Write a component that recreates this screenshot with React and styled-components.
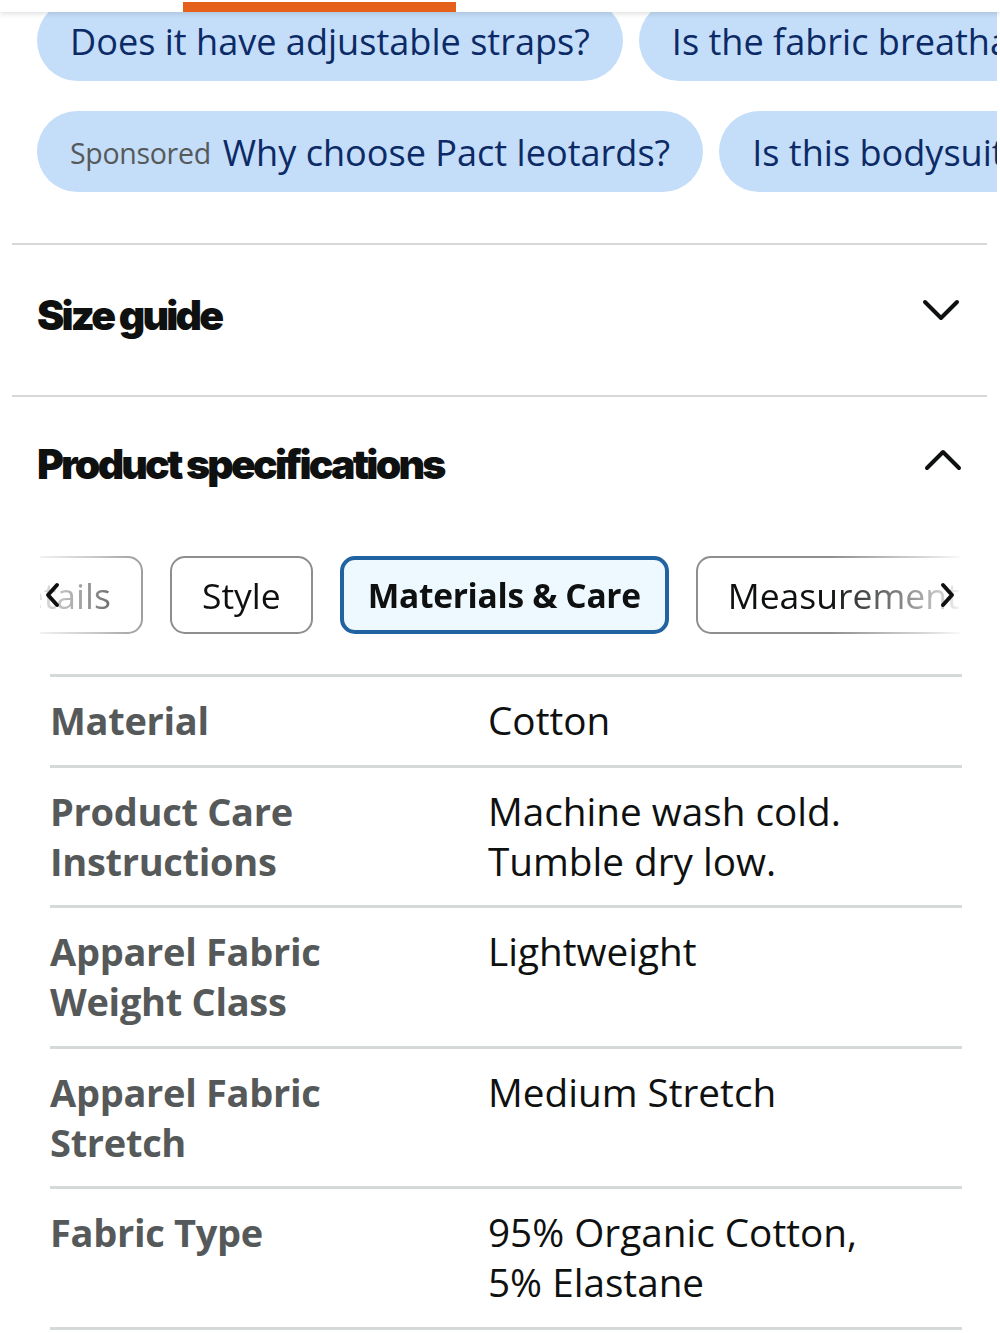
import React from "react";
import styled, { createGlobalStyle, css } from "styled-components";

const GlobalStyle = createGlobalStyle`
  html, body {
    margin: 0;
    padding: 0;
    background: #ffffff;
  }
  body {
    font-family: "Open Sans", "Noto Sans", "DejaVu Sans", sans-serif;
    color: #0f1111;
    -webkit-font-smoothing: antialiased;
  }
  * { box-sizing: border-box; }
`;

const Page = styled.div`
  position: relative;
  width: 1000px;
  min-height: 1333px;
  overflow: hidden;
`;

/* sticky tab header that sits over the scrolled content */
const StickyHeader = styled.div`
  position: absolute;
  top: 0;
  left: 0;
  right: 0;
  height: 12px;
  background: #ffffff;
  box-shadow: 0 2px 5px rgba(0, 0, 0, 0.12);
  z-index: 5;
`;

const ActiveIndicator = styled.div`
  position: absolute;
  left: 183px;
  top: 2px;
  width: 273px;
  height: 10px;
  background: #e4601b;
`;

const QuestionArea = styled.div`
  display: flex;
  flex-direction: column;
  gap: 30px;
  width: 997px;
  overflow: hidden;
  padding-left: 37px;
`;

const PillRow = styled.div`
  display: flex;
  gap: 16px;
  white-space: nowrap;
`;

const Pill = styled.div`
  flex: 0 0 auto;
  display: flex;
  align-items: center;
  gap: 12px;
  height: 81px;
  padding: 0 33px;
  border-radius: 41px;
  background: #c4ddf9;
  color: #0c2b66;
  font-size: 36.1px;
  letter-spacing: 0;
`;

const SponsoredTag = styled.span`
  color: #565959;
  font-size: 28.5px;
  letter-spacing: -0.3px;
  padding-top: 3px;
`;

const Sections = styled.div`
  margin-top: 51px;
  padding: 0 13px 0 12px;
`;

const AccordionHead = styled.div`
  display: flex;
  align-items: center;
  justify-content: space-between;
  border-top: 2px solid #d8d8d8;
  ${(p) =>
    p.$open
      ? css`
          padding: 47px 24px 70px 25px;
        `
      : css`
          height: 152px;
          padding: 0 26px 10px 25px;
        `}
`;

const HeadTitle = styled.h2`
  margin: 0;
  font-family: "Inter", "Roboto", sans-serif;
  font-weight: 900;
  font-size: 41px;
  letter-spacing: -2.8px;
  line-height: 1;
  color: #0f1111;
`;

const Chevron = styled.svg`
  width: 40px;
  height: 26px;
  flex: 0 0 auto;
  margin-top: ${(p) => p.$mt || 0}px;
`;

const SpecBody = styled.div`
  padding: 0 13px 0 28px;
`;

const TabStrip = styled.div`
  position: relative;
  height: 80px;
  padding: 1px 0;
  overflow: hidden;
  -webkit-mask-image: linear-gradient(
    to right,
    rgba(0, 0, 0, 0.12) 0px,
    rgba(0, 0, 0, 0.45) 50px,
    #000 120px,
    #000 790px,
    rgba(0, 0, 0, 0.35) 885px,
    rgba(0, 0, 0, 0.05) 920px
  );
  mask-image: linear-gradient(
    to right,
    rgba(0, 0, 0, 0.12) 0px,
    rgba(0, 0, 0, 0.45) 50px,
    #000 120px,
    #000 790px,
    rgba(0, 0, 0, 0.35) 885px,
    rgba(0, 0, 0, 0.05) 920px
  );
`;

const TabWrap = styled.div`
  position: relative;
  width: 920px;
`;

const TabTrack = styled.div`
  display: flex;
  gap: 27px;
  white-space: nowrap;
`;

const Tab = styled.div`
  flex: 0 0 auto;
  height: 78px;
  display: flex;
  align-items: center;
  padding: 0 30px;
  border: 2px solid #8d8f8f;
  border-radius: 15px;
  font-size: 35.5px;
  color: #0f1111;
  background: #ffffff;
  ${(p) =>
    p.$active &&
    css`
      border: 4px solid #2162a1;
      background: #edf8ff;
      font-weight: 700;
      font-size: 33.5px;
      letter-spacing: -0.3px;
      padding: 0 24px;
    `}
`;

const ScrollArrow = styled.svg`
  position: absolute;
  top: 26px;
  width: 18px;
  height: 28px;
  z-index: 2;
  ${(p) => (p.$side === "left" ? "left: 3px;" : "right: 3px;")}
`;

const SpecTable = styled.div`
  margin: 39px 12px 0 10px;
`;

const SpecRow = styled.div`
  display: grid;
  grid-template-columns: 438px 1fr;
  border-top: 3px solid #d5d9d9;
  padding: 18px 0 19.5px;
  line-height: 50px;
  &:last-child {
    border-bottom: 3px solid #d5d9d9;
  }
`;

const SpecLabel = styled.div`
  color: #565959;
  font-weight: 700;
  font-size: 38px;
  letter-spacing: -0.3px;
`;

const SpecValue = styled.div`
  color: #0f1111;
  font-size: 38.7px;
  letter-spacing: 0;
`;

const ChevronDown = () => (
  <Chevron viewBox="0 0 40 26" $mt={-10}>
    <path d="M4 5 L20 21 L36 5" fill="none" stroke="#0f1111" strokeWidth="4" strokeLinecap="round" strokeLinejoin="round" />
  </Chevron>
);

const ChevronUp = () => (
  <Chevron viewBox="0 0 40 26" $mt={-10}>
    <path d="M4 21 L20 5 L36 21" fill="none" stroke="#0f1111" strokeWidth="4" strokeLinecap="round" strokeLinejoin="round" />
  </Chevron>
);

const specs = [
  [["Material"], ["Cotton"]],
  [["Product Care", "Instructions"], ["Machine wash cold.", "Tumble dry low."]],
  [["Apparel Fabric", "Weight Class"], ["Lightweight"]],
  [["Apparel Fabric", "Stretch"], ["Medium Stretch"]],
  [["Fabric Type"], ["95% Organic Cotton,", "5% Elastane"]],
];

const Lines = ({ parts }) => parts.map((t, i) => <div key={i}>{t}</div>);

export default function App() {
  return (
    <>
      <GlobalStyle />
      <Page>
        <StickyHeader>
          <ActiveIndicator />
        </StickyHeader>

        <QuestionArea>
          <PillRow>
            <Pill>Does it have adjustable straps?</Pill>
            <Pill>Is the fabric breathable?</Pill>
          </PillRow>
          <PillRow>
            <Pill>
              <SponsoredTag>Sponsored</SponsoredTag>
              Why choose Pact leotards?
            </Pill>
            <Pill>Is this bodysuit true to size?</Pill>
          </PillRow>
        </QuestionArea>

        <Sections>
          <AccordionHead>
            <HeadTitle>Size guide</HeadTitle>
            <ChevronDown />
          </AccordionHead>

          <AccordionHead $open>
            <HeadTitle>Product specifications</HeadTitle>
            <ChevronUp />
          </AccordionHead>

          <SpecBody>
            <TabWrap>
              <TabStrip>
                <TabTrack style={{ transform: "translateX(-74px)" }}>
                  <Tab>Details</Tab>
                  <Tab>Style</Tab>
                  <Tab $active>Materials &amp; Care</Tab>
                  <Tab>Measurements</Tab>
                </TabTrack>
              </TabStrip>
              <ScrollArrow $side="left" viewBox="0 0 18 28">
                <path d="M14 4 L5 14 L14 24" fill="none" stroke="#0f1111" strokeWidth="4" strokeLinecap="round" strokeLinejoin="round" />
              </ScrollArrow>
              <ScrollArrow $side="right" viewBox="0 0 18 28">
                <path d="M4 4 L13 14 L4 24" fill="none" stroke="#0f1111" strokeWidth="4" strokeLinecap="round" strokeLinejoin="round" />
              </ScrollArrow>
            </TabWrap>

            <SpecTable>
              {specs.map(([label, value]) => (
                <SpecRow key={label.join(" ")}>
                  <SpecLabel>
                    <Lines parts={label} />
                  </SpecLabel>
                  <SpecValue>
                    <Lines parts={value} />
                  </SpecValue>
                </SpecRow>
              ))}
            </SpecTable>
          </SpecBody>
        </Sections>
      </Page>
    </>
  );
}
